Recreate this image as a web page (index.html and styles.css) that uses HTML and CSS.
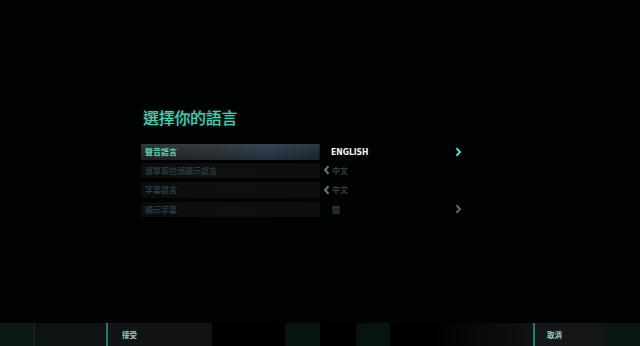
FILE: index.html
```html
<!DOCTYPE html>
<html>
<head>
<meta charset="utf-8">
<link rel="stylesheet" href="styles.css">
</head>
<body>
<div class="screen">
  <main class="main">
    <h1 class="title">選擇你的語言</h1>
    <div class="list">
      <div class="row active">
        <div class="label">聲音語言</div>
        <div class="value">
          <span class="arrow left hidden"></span>
          <span class="val">ENGLISH</span>
          <span class="arrow right">
            <svg width="7" height="10" viewBox="0 0 7 10"><path d="M1.5 1.2 L5 5 L1.5 8.8" fill="none" stroke="currentColor" stroke-width="2"/></svg>
          </span>
        </div>
      </div>
      <div class="row">
        <div class="label">選單和抬頭顯示語言</div>
        <div class="value">
          <span class="arrow left"><svg width="7" height="10" viewBox="0 0 7 10"><path d="M5.5 1.2 L2 5 L5.5 8.8" fill="none" stroke="currentColor" stroke-width="2"/></svg></span>
          <span class="val">中文</span>
          <span class="arrow right hidden"></span>
        </div>
      </div>
      <div class="row">
        <div class="label">字幕語言</div>
        <div class="value">
          <span class="arrow left"><svg width="7" height="10" viewBox="0 0 7 10"><path d="M5.5 1.2 L2 5 L5.5 8.8" fill="none" stroke="currentColor" stroke-width="2"/></svg></span>
          <span class="val">中文</span>
          <span class="arrow right hidden"></span>
        </div>
      </div>
      <div class="row">
        <div class="label">顯示字幕</div>
        <div class="value">
          <span class="arrow left hidden"></span>
          <span class="val">關</span>
          <span class="arrow right dim"><svg width="7" height="10" viewBox="0 0 7 10"><path d="M1.5 1.2 L5 5 L1.5 8.8" fill="none" stroke="currentColor" stroke-width="2"/></svg></span>
        </div>
      </div>
    </div>
  </main>
  <footer class="bar">
    <div class="seg s1"></div>
    <div class="seg s2"></div>
    <div class="seg btn"><span>接受</span></div>
    <div class="seg s3"></div>
    <div class="seg s4"></div>
    <div class="seg s5"></div>
    <div class="seg s6"></div>
    <div class="seg s7"></div>
    <div class="seg s8"></div>
    <div class="seg btn btn2"><span>取消</span></div>
    <div class="seg s9"></div>
  </footer>
</div>
</body>
</html>
```

FILE: styles.css
```css
html, body {
  margin: 0;
  padding: 0;
  background: #000;
}
.screen {
  width: 640px;
  height: 346px;
  display: flex;
  flex-direction: column;
  background: #010202;
  font-family: "Noto Sans CJK TC", "Noto Sans", sans-serif;
  overflow: hidden;
}
.main {
  flex: 1;
  padding: 105px 0 0 141px;
}
.title {
  margin: 0 0 0 2px;
  font-size: 16px;
  line-height: 24px;
  font-weight: 500;
  color: #55c9b2;
  letter-spacing: -0.3px;
  text-shadow: 0 0 4px rgba(60, 200, 170, 0.35);
}
.list {
  margin-top: 15px;
  display: flex;
  flex-direction: column;
  gap: 4px;
}
.row {
  display: flex;
  align-items: center;
  height: 15.5px;
}
.row.active {
  margin-bottom: -1px;
}
.label {
  width: 175px;
  height: 100%;
  padding-left: 4px;
  display: flex;
  align-items: center;
  font-size: 8px;
  font-weight: 700;
  color: #2c3a40;
  background: linear-gradient(90deg, #0a0c0d 0%, #0d0f10 50%, #0b0d0e 100%);
}
.row.active .label {
  color: #62d2bc;
  background:
    linear-gradient(180deg, rgba(255,255,255,0.05) 0%, rgba(0,0,0,0) 40%, rgba(0,0,0,0.25) 100%),
    linear-gradient(90deg, #262b2e 0%, #2c3336 35%, #2d3d4a 70%, #22303a 98%, #1b3a38 99%, #101416 100%);
}
.value {
  display: flex;
  align-items: center;
  height: 100%;
  width: 141px;
  padding-left: 2px;
}
.arrow {
  width: 9px;
  display: flex;
  align-items: center;
  justify-content: center;
  color: #6f7579;
}
.arrow.left {
  margin-right: 1px;
}
.arrow.right {
  margin-left: auto;
  color: #5fd6d6;
}
.arrow.right.dim {
  color: #62676b;
}
.arrow.hidden {
  visibility: hidden;
}
.val {
  width: 120px;
  font-size: 8px;
  font-weight: 700;
  color: #343f44;
}
.row.active .val {
  font-family: "DejaVu Sans Condensed", "Liberation Sans Narrow", "Liberation Sans", sans-serif;
  font-size: 8.5px;
  color: #f2f4f4;
  margin-left: -1px;
}
.bar {
  height: 23px;
  display: flex;
}
.seg {
  height: 100%;
}
.s1 { width: 34px; background: #0b1917; border-right: 1px solid #1c2a28; }
.s2 { width: 71px; background: #0f1213; }
.btn {
  background: #121314;
  border-left: 2px solid #1e7f6e;
  display: flex;
  align-items: center;
  padding-left: 14px;
  box-sizing: border-box;
  width: 106px;
}
.btn span {
  font-size: 7.5px;
  font-weight: 700;
  color: #9fc9c2;
}
.s3 { width: 73px; background: #000; }
.s4 { width: 35px; background: #061311; }
.s5 { width: 36px; background: #000; }
.s6 { width: 34px; background: #061311; }
.s7 { width: 40px; background: #000; }
.s8 { width: 103px; background: linear-gradient(90deg, #000 0%, #08090a 50%, #101112 100%); }
.btn2 {
  width: 72px;
  padding-left: 12px;
  background: #141617;
}
.s9 { flex: 1; background: #0a1614; }
```
